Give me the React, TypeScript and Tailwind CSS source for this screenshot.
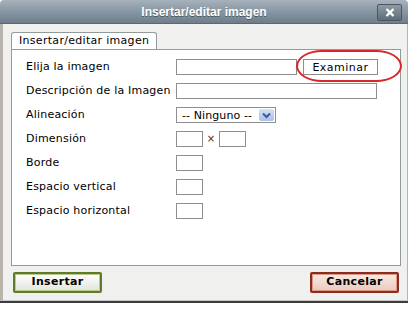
import React from "react"

const font = { fontFamily: "Verdana, 'DejaVu Sans', sans-serif" }

function Field({ w }: { w: string }) {
  return <div className={`${w} h-[16px] border border-[#8e8e8e] bg-white`} />
}

export default function App() {
  const rows: { label: string; control: React.ReactNode }[] = [
    {
      label: "Elija la imagen",
      control: (
        <div className="relative flex items-center gap-[6px]">
          <Field w="w-[121px]" />
          <button className="w-[75px] h-[16px] border border-[#8e8e8e] bg-white text-[11px] tracking-[0.5px] text-black leading-none">
            Examinar
          </button>
          <div className="absolute left-[120px] top-[-9px] w-[106px] h-[32px] border-2 border-[#d9262a] rounded-[26px/16px]" />
        </div>
      ),
    },
    { label: "Descripción de la Imagen", control: <Field w="w-[201px]" /> },
    {
      label: "Alineación",
      control: (
        <div className="flex items-center w-[100px] h-[16px] border border-[#8e8e8e] bg-white">
          <span className="flex-1 pl-[5px] text-[11px] tracking-[0.1px] leading-none whitespace-nowrap">-- Ninguno --</span>
          <span className="mr-[1px] w-[15px] h-[12px] rounded-[2px] bg-gradient-to-b from-[#d6e2f6] to-[#a9c0e8] flex items-center justify-center">
            <svg width="9" height="7" viewBox="0 0 9 7">
              <path d="M1 1.5 L4.5 5 L8 1.5" fill="none" stroke="#3b5a9a" strokeWidth="2" />
            </svg>
          </span>
        </div>
      ),
    },
    {
      label: "Dimensión",
      control: (
        <div className="flex items-center">
          <Field w="w-[27px]" />
          <span className="w-[16px] text-center text-[10px] leading-none text-[#333]">×</span>
          <Field w="w-[27px]" />
        </div>
      ),
    },
    { label: "Borde", control: <Field w="w-[27px]" /> },
    { label: "Espacio vertical", control: <Field w="w-[27px]" /> },
    { label: "Espacio horizontal", control: <Field w="w-[27px]" /> },
  ]

  return (
    <div className="w-[408px] h-[312px] bg-white overflow-hidden" style={font}>
      <div className="h-[303px] flex flex-col border-b-[2px] border-[#3c3c3c]">
        {/* Title bar */}
        <div className="relative h-[24px] flex items-center justify-center rounded-t-[4px] bg-gradient-to-b from-[#a7b2bc] via-[#8796a3] to-[#6e7e8b] border-b border-[#5a6872]">
          <span className="text-white font-bold text-[12px] [text-shadow:0_1px_0_#4a5864]" style={{ fontFamily: "Tahoma, 'Liberation Sans', sans-serif" }}>
            Insertar/editar imagen
          </span>
          <div className="absolute right-[6px] top-[4px] w-[25px] h-[17px] rounded-[2px] border border-[#4b5862] bg-gradient-to-b from-[#8e9ba6] to-[#5f6d78] flex items-center justify-center">
            <svg width="10" height="9" viewBox="0 0 10 9">
              <path d="M1.5 1 L8.5 8 M8.5 1 L1.5 8" stroke="#fff" strokeWidth="2.4" />
            </svg>
          </div>
        </div>

        {/* Body */}
        <div className="flex-1 flex flex-col bg-[#f0f0ee] border-l-[3px] border-l-[#b8b4ac] border-r border-r-[#b8b4ac] border-b border-b-[#c8c8c8] pl-[8px] pr-[6px] pt-[8px]">
          <div className="self-start h-[17px] px-[7px] flex items-center border border-b-0 border-[#919b9c] rounded-t-[3px] bg-white text-[11px] tracking-[0.3px] text-black">
            Insertar/editar imagen
          </div>
          <div className="h-[217px] border border-[#919b9c] bg-white pl-[14px] pt-[9px]">
            <div className="grid grid-cols-[150px_1fr] gap-y-[8px]">
              {rows.map((r) => (
                <React.Fragment key={r.label}>
                  <div className="h-[16px] flex items-center text-[11px] tracking-[0.2px] text-black whitespace-nowrap">{r.label}</div>
                  <div className="h-[16px] flex items-center">{r.control}</div>
                </React.Fragment>
              ))}
            </div>
          </div>
          <div className="flex justify-between items-center pt-[6px] pl-[2px] pr-[2px]">
            <button className="w-[89px] h-[21px] border-2 border-[#5e7a2a] rounded-[2px] bg-gradient-to-b from-white to-[#e4e4dc] text-[11px] font-bold text-black tracking-[0.3px] shadow-[inset_0_0_0_1px_#b9c98e]">
              Insertar
            </button>
            <button className="w-[89px] h-[21px] border-2 border-[#8c2c1e] rounded-[2px] bg-gradient-to-b from-[#fbeae4] to-[#e9c9bf] text-[11px] font-bold text-black tracking-[0.3px] shadow-[inset_0_0_0_1px_#d99a8a]">
              Cancelar
            </button>
          </div>
        </div>
      </div>
    </div>
  )
}
